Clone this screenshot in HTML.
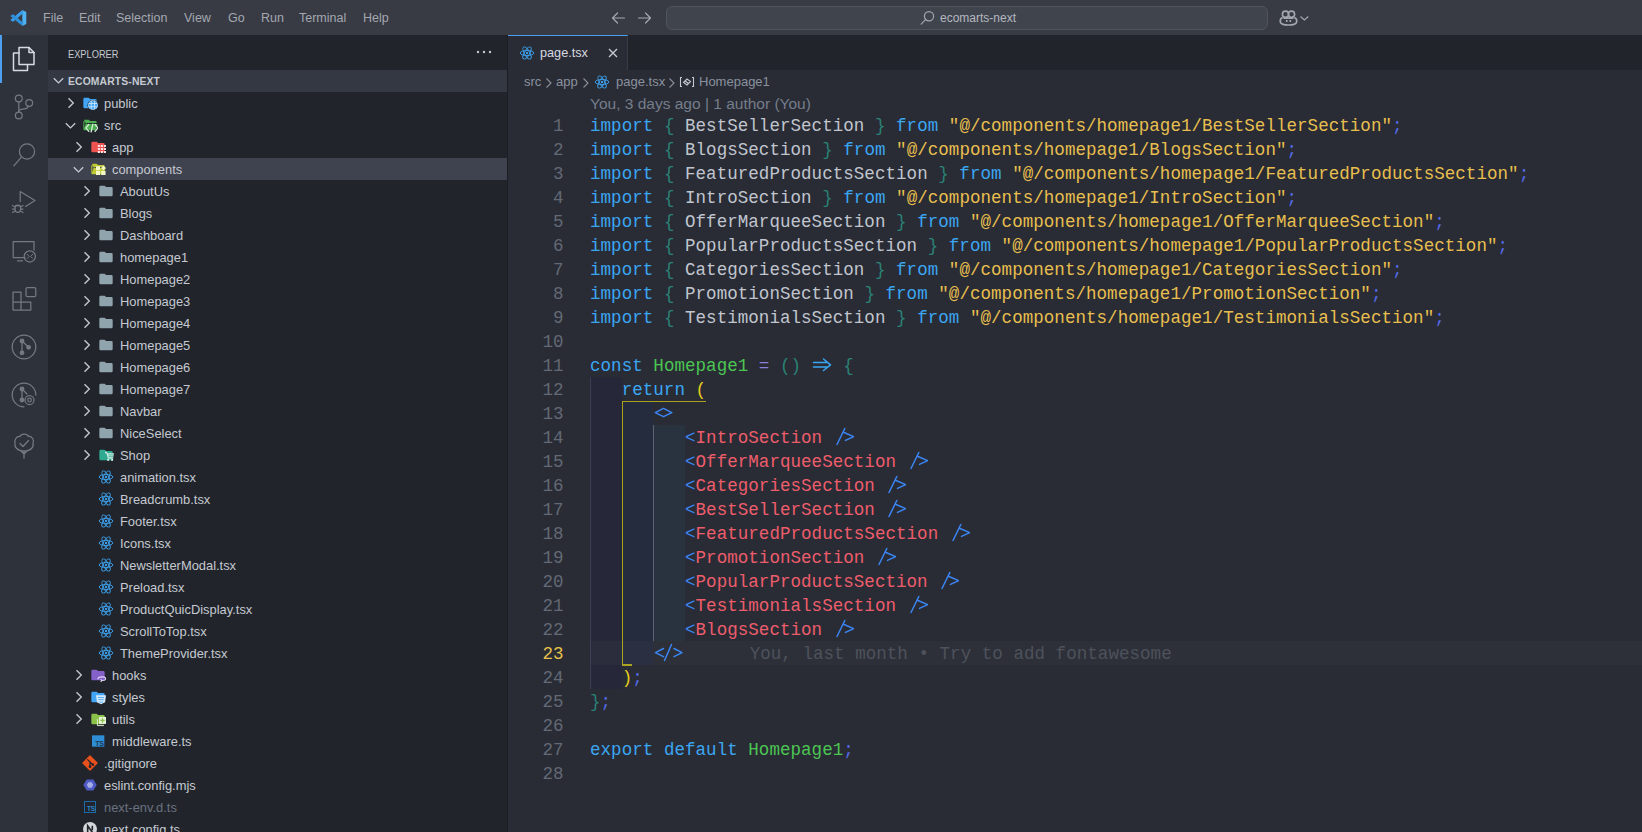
<!DOCTYPE html>
<html><head><meta charset="utf-8">
<style>
*{box-sizing:border-box;margin:0;padding:0}
html,body{width:1642px;height:832px;overflow:hidden;background:#282c34;font-family:"Liberation Sans",sans-serif}
.abs{position:absolute}
#title{position:absolute;left:0;top:0;width:1642px;height:35px;background:#383b44}
#title .m{position:absolute;top:11px;font-size:12.5px;color:#a3a7b0;line-height:14px;white-space:nowrap}
#act{position:absolute;left:0;top:35px;width:48px;height:797px;background:#2e323b}
#side{position:absolute;left:48px;top:35px;width:459px;height:797px;background:#21252b}
#sideborder{position:absolute;left:507px;top:35px;width:1px;height:797px;background:#1b1e23}
#tabs{position:absolute;left:508px;top:35px;width:1134px;height:35px;background:#21252b}
#editor{position:absolute;left:508px;top:70px;width:1134px;height:762px;background:#292c35}
.row{position:absolute;left:0;width:459px;height:22px;font-size:12.9px;color:#c5c9d1;line-height:22px;white-space:nowrap}
.row span.lb{position:absolute;top:1px}
.code{position:absolute;font-family:"Liberation Mono",monospace;font-size:17.5px;letter-spacing:0.05px;line-height:24px;white-space:pre;color:#c0c5ce;height:24px;padding-top:1px}
.ln{position:absolute;left:0;width:55.5px;text-align:right;font-family:"Liberation Mono",monospace;font-size:17.5px;line-height:24px;color:#636975;padding-top:1px}
.ln.cur{color:#e6c24a}
.k{color:#3ba6f2}.b{color:#2a8275}.i{color:#c0c5ce}.s{color:#e8bf4e}.sc{color:#5569e6}.g{color:#4cc552}.op{color:#8b7fd6}.y{color:#e8cf1c}.t{color:#3b86f5}.r{color:#ee5d6c}
.bl{color:#4d525b;position:relative;left:1.5px}
.lg{display:inline-block;vertical-align:top;height:24px;position:relative;top:-1px}
.lg svg{display:block}
.bc{font-size:13px;line-height:16px;color:#8a919e;white-space:nowrap}
</style></head><body>
<div id="title">
  <svg class="abs" style="left:0;top:0" width="40" height="35"><g fill="#3a9ce6"><path d="M22.3 10L26.3 11.9V24.1L22.3 26Z" fill="#4fb0f2"/><path d="M22.3 10L23.2 13.2L13.2 21.8L11.6 21L10.3 19.9Z"/><path d="M10.3 16.1L11.6 15L13.2 14.2L23.2 22.8L22.3 26Z" fill="#2f8fd8"/></g></svg>
<svg class="abs" style="left:606px;top:9px" width="52" height="18"><g fill="none" stroke="#a3a7b0" stroke-width="1.2" stroke-linecap="round" stroke-linejoin="round"><path d="M18.5 9H6.5M11.5 4L6.5 9L11.5 14"/><path d="M32.5 9H44.5M39.5 4L44.5 9L39.5 14"/></g></svg>
<div class="abs" style="left:666px;top:6px;width:602px;height:24px;background:#40444d;border:1px solid #50545d;border-radius:6px"></div>
<svg class="abs" style="left:918px;top:9px" width="18" height="18"><g fill="none" stroke="#a3a7b0" stroke-width="1.2"><circle cx="11" cy="7.2" r="4.6"/><path d="M7.8 10.4L3.2 15.2" stroke-linecap="round"/></g></svg>
<div class="abs" style="left:940px;top:11px;font-size:12px;line-height:14px;color:#b4b8c0;white-space:nowrap">ecomarts-next</div>
<svg class="abs" style="left:1278px;top:8px" width="34" height="20"><g fill="none" stroke="#a3a7af" stroke-width="1.6"><circle cx="7.5" cy="6.2" r="3.1"/><circle cx="13.5" cy="6.2" r="3.1"/><path d="M4.6 9.6C2.6 10.3 2 12 2.3 14C2.8 16.3 6 17 10.5 17C15 17 18.2 16.3 18.7 14C19 12 18.4 10.3 16.4 9.6"/><path d="M5.5 10.2H15.5"/><path d="M8.7 12V14M12.3 12V14"/></g><path d="M22.5 8.5L26.4 12L30.3 8.5" fill="none" stroke="#a3a7af" stroke-width="1.1"/></svg>
<div class="m" style="left:43px">File</div>
  <div class="m" style="left:79px">Edit</div>
  <div class="m" style="left:116px">Selection</div>
  <div class="m" style="left:184px">View</div>
  <div class="m" style="left:228px">Go</div>
  <div class="m" style="left:261px">Run</div>
  <div class="m" style="left:299px">Terminal</div>
  <div class="m" style="left:363px">Help</div>
</div>
<div id="act">
<div class="abs" style="left:0;top:0;width:2px;height:48px;background:#4d9df0"></div>
<svg class="abs" style="left:0;top:0" width="48" height="480" viewBox="0 35 48 480" fill="none" stroke-linejoin="round" stroke-linecap="round">
 <g stroke="#d7dae0" stroke-width="1.5">
  <path d="M19 53 H13.5 V70.5 H27.5 V65"/>
  <path d="M19 47.5 H29 L34 52.5 V64.5 H19 Z"/>
  <path d="M29 47.5 V52.5 H34"/>
 </g>
 <g stroke="#757983" stroke-width="1.25">
  <circle cx="18.8" cy="98.4" r="3.4"/>
  <circle cx="29.2" cy="102.9" r="3.4"/>
  <circle cx="18.8" cy="115.5" r="3.4"/>
  <path d="M18.8 101.8 V112.1"/>
  <path d="M28.5 106.2 C27.5 108.5 25.5 109 22.5 109 C20.5 109 19 110 18.8 112"/>
  <circle cx="27" cy="151.5" r="7.6"/>
  <path d="M21.6 156.9 L13.8 165.8"/>
  <path d="M20.2 201.5 V191.5 L35 200.5 L25.5 206.5"/>
  <ellipse cx="17.8" cy="208.8" rx="2.8" ry="3.6"/>
  <path d="M12.5 205.5 L15 207 M12.5 212.5 L15 211 M23 205.5 L20.6 207 M23 212.5 L20.6 211 M12.5 209 H15 M20.6 209 H23 M15.5 205.5 L20 205.5"/>
  <path d="M25 257.5 H13.2 V241.5 H34 V250"/>
  <path d="M17.5 260.8 H22.5"/>
  <circle cx="29.8" cy="256.4" r="5.6"/>
  <path d="M27.2 254.4 L29.2 256.4 L27.2 258.4 M32.6 254.4 L30.6 256.4 L32.6 258.4" stroke-width="1"/>
  <path d="M13 292 H21 V302 H30.8 V310 H13 Z M13 302 H21 V310"/>
  <rect x="26" y="287.5" width="9.8" height="9.2" rx="1.5"/>
  <circle cx="24" cy="347" r="11.8"/>
  <circle cx="22" cy="341" r="1.8" fill="#757983"/>
  <circle cx="28.6" cy="347.3" r="1.8" fill="#757983"/>
  <circle cx="22" cy="352.8" r="1.8" fill="#757983"/>
  <path d="M22 341 V352.8 M22 341 L28.6 347.3"/>
  <path d="M35.8 395 A11.8 11.8 0 1 0 24 406.8"/>
  <circle cx="22" cy="389" r="1.8" fill="#757983"/>
  <circle cx="22" cy="400" r="1.8" fill="#757983"/>
  <path d="M22 389 V400 M22 389 L27 394"/>
  <circle cx="29.5" cy="400" r="4.5"/>
  <circle cx="29.5" cy="400" r="1.8"/>
  <path d="M24 451 C17 451 14.5 447 15 443.5 C14 440 16.5 436 20 436.5 C21 433.5 27 433 28.5 436.5 C32 436 34.5 440 33 443.5 C34 447 31 451 24 451 Z"/>
  <path d="M24 451 V458 M24 454 L21 451 M24 454 L27 451"/>
  <path d="M20 443.5 L23 446.5 L28.5 440.5"/>
 </g>
</svg>
</div>
<svg width="0" height="0" style="position:absolute">
<defs>
 <path id="pfold" d="M10 4H4c-1.11 0-2 .89-2 2v12a2 2 0 0 0 2 2h16a2 2 0 0 0 2-2V8a2 2 0 0 0-2-2h-8l-2-2z"/>
 <path id="pfoldo" d="M3.5 4H10l2 2h8a2 2 0 0 1 2 2v1H7.2a2 2 0 0 0-1.9 1.4L3.5 17V4zM2 6v12a2 2 0 0 0 2 2h16.2l3.3-9.6H7.6z"/>
 <symbol id="fgray" viewBox="0 0 24 24"><use href="#pfold" fill="#90a4ae"/></symbol>
 <symbol id="fpublic" viewBox="0 0 24 24"><use href="#pfold" fill="#42a5f5"/>
  <circle cx="16.4" cy="15.2" r="8.2" fill="#21252b"/><circle cx="16.4" cy="15.2" r="7.4" fill="#c8e4fb"/>
  <g fill="#42a5f5"><rect x="14.6" y="13.4" width="3.6" height="3.6"/><rect x="9.8" y="13.4" width="3.4" height="3.6"/><rect x="19.6" y="13.4" width="3.4" height="3.6"/><rect x="14.6" y="8.8" width="3.6" height="3.2"/><rect x="14.6" y="18.4" width="3.6" height="3.2"/><rect x="11" y="9.8" width="2.4" height="2.2"/><rect x="19.4" y="9.8" width="2.4" height="2.2"/><rect x="11" y="18.4" width="2.4" height="2.2"/><rect x="19.4" y="18.4" width="2.4" height="2.2"/></g></symbol>
 <symbol id="fsrc" viewBox="0 0 24 24"><use href="#pfoldo" fill="#4caf50"/>
  <g stroke="#d4edd5" stroke-width="2" fill="none" stroke-linecap="round" stroke-linejoin="round"><path d="M10.2 11.2l-4.4 5.2 4.4 5.2M19.6 11.2l4.2 5.2-4.2 5.2M16.3 10.6l-2.6 11.8"/></g></symbol>
 <symbol id="fapp" viewBox="0 0 24 24"><use href="#pfold" fill="#ef5350"/>
  <g fill="#ffe0e3"><rect x="11.7" y="9" width="3.2" height="3"/><rect x="16.2" y="9" width="3.2" height="3"/><rect x="20.7" y="9" width="3.2" height="3"/><rect x="11.7" y="13.5" width="3.2" height="3"/><rect x="16.2" y="13.5" width="3.2" height="3"/><rect x="20.7" y="13.5" width="3.2" height="3"/><rect x="11.7" y="18" width="3.2" height="3"/><rect x="16.2" y="18" width="3.2" height="3"/><rect x="20.7" y="18" width="3.2" height="3"/></g></symbol>
 <symbol id="fcomp" viewBox="0 0 24 24"><use href="#pfoldo" fill="#c0ca33"/>
  <g fill="#f4f8c8"><rect x="9" y="8" width="6.2" height="5.8"/><rect x="9" y="14.8" width="6.2" height="6.2"/><rect x="16.8" y="14.8" width="6.5" height="6.2"/><path d="M20.2 6.8l3.6 3.6-3.6 3.6-3.6-3.6z"/></g></symbol>
 <symbol id="fshop" viewBox="0 0 24 24"><use href="#pfold" fill="#2fa98f"/>
  <g fill="#d0ebe4"><path d="M10.5 7.2h2.6l1 2.3h9.8l-1.2 6.8h-8.2l-2-6.8h-2z"/><rect x="13.8" y="18" width="2.8" height="2.8"/><rect x="19.8" y="18" width="2.8" height="2.8"/><rect x="14.5" y="16.3" width="8.4" height="1.2"/></g><path d="M15.3 11.8h7.5M15.8 14h6.8" stroke="#2fa98f" stroke-width="1.1"/></symbol>
 <symbol id="fhooks" viewBox="0 0 24 24"><use href="#pfold" fill="#8460c9"/>
  <g fill="none" stroke="#e2d6f5" stroke-width="1.7"><path d="M12.5 18.5C11 16.5 14 14.8 18 14.8C21.5 14.8 23.5 16 23.5 17.5C23.5 19.2 21 20.3 17.5 20.3"/><path d="M16 18.5l1.8 1.8-1.8 1.8"/></g></symbol>
 <symbol id="fstyles" viewBox="0 0 24 24"><use href="#pfold" fill="#42a5f5"/>
  <path d="M9 9.5h15l-1.4 10.2-6.1 3.2-6.1-3.2z" fill="#d4eafc"/><path d="M12 12.8h9M12.6 16h8M14 19.2l2.5 1 2.8-1" stroke="#42a5f5" stroke-width="1.3" fill="none"/></symbol>
 <symbol id="futils" viewBox="0 0 24 24"><use href="#pfold" fill="#8bc34a"/>
    <path d="M11.1 12.2v9.7h9.8" fill="none" stroke="#e6f2d6" stroke-width="1.4"/>
    <rect x="13.5" y="9" width="10.5" height="10.4" fill="#e6f2d6"/><path d="M18.75 10.8v6.8M15.35 14.2h6.8" stroke="#8bc34a" stroke-width="1.9"/></symbol>
 <symbol id="react" viewBox="0 0 24 24"><g fill="none" stroke="#3d9ee8" stroke-width="1.45"><ellipse cx="12" cy="12" rx="10.2" ry="3.9"/><ellipse cx="12" cy="12" rx="10.2" ry="3.9" transform="rotate(60 12 12)"/><ellipse cx="12" cy="12" rx="10.2" ry="3.9" transform="rotate(120 12 12)"/></g><circle cx="12" cy="12" r="1.8" fill="#3d9ee8"/></symbol>
 <symbol id="ts" viewBox="0 0 24 24"><rect x="3" y="3.5" width="18.5" height="17" fill="#2d8ed6"/><text x="14" y="19.5" font-family="Liberation Sans" font-weight="bold" font-size="10.5" fill="#1f3550" text-anchor="middle" letter-spacing="-0.5">TS</text></symbol>
 <symbol id="tsout" viewBox="0 0 24 24"><rect x="3.7" y="3.7" width="16.6" height="16.6" fill="none" stroke="#1f6fb0" stroke-width="1.4"/><text x="13.5" y="18.5" font-family="Liberation Sans" font-weight="bold" font-size="10" fill="#2b82c9" text-anchor="middle" letter-spacing="-0.5">TS</text></symbol>
 <symbol id="git" viewBox="0 0 24 24"><path d="M12 1.5L22.5 12 12 22.5 1.5 12z" fill="#e8501c" stroke="#e8501c" stroke-width="2" stroke-linejoin="round"/><g stroke="#21252b" stroke-width="1.7" fill="none"><path d="M8 6.5L12 10.5v7M12 10.5l4 4"/></g><circle cx="12" cy="17.5" r="2" fill="#21252b"/><circle cx="16.2" cy="14.5" r="2" fill="#21252b"/></symbol>
 <symbol id="eslint" viewBox="0 0 24 24"><path d="M7 3.8h10L22 12l-5 8.2H7L2 12z" fill="#4f5bc4"/><path d="M9.6 8h4.8L16.8 12l-2.4 4H9.6L7.2 12z" fill="#a5aee6"/></symbol>
 <symbol id="next" viewBox="0 0 24 24"><circle cx="12" cy="12" r="10.5" fill="#d3d7da"/><path d="M8.5 17.5V7l8.5 12M15.5 7v7" stroke="#21252b" stroke-width="2.4" fill="none"/></symbol>
</defs></svg>
<div id="side">
<div class="abs" style="left:20px;top:11.5px;font-size:11.3px;color:#c5c9d1;line-height:14px;transform:scaleX(0.82);transform-origin:0 0">EXPLORER</div>
<svg class="abs" style="left:428px;top:12px" width="16" height="10"><circle cx="2" cy="5" r="1.2" fill="#c5c9d1"/><circle cx="8" cy="5" r="1.2" fill="#c5c9d1"/><circle cx="14" cy="5" r="1.2" fill="#c5c9d1"/></svg>
<div class="abs" style="left:0;top:35px;width:459px;height:22px;background:#333842"></div>
<svg class="abs" style="left:5px;top:41px" width="12" height="10"><path d="M0.8 2.2 L5.5 6.9 L10.2 2.2" fill="none" stroke="#c5c9d1" stroke-width="1.35"/></svg>
<div class="abs" style="left:20px;top:35px;font-size:11px;font-weight:bold;color:#c5c9d1;line-height:22px;letter-spacing:0.15px;transform:scaleX(0.94);transform-origin:0 0">ECOMARTS-NEXT</div>
<div class="row" style="top:57px;">
<svg class="abs" style="left:19px;top:5px" width="10" height="12"><path d="M1.5 1.2 L6.3 6 L1.5 10.8" fill="none" stroke="#c5c9d1" stroke-width="1.35"/></svg>
<svg class="abs" style="left:34px;top:3px" width="16" height="16"><use href="#fpublic"/></svg>
<span class="lb" style="left:56px;">public</span>
</div>
<div class="row" style="top:79px;">
<svg class="abs" style="left:17px;top:8px" width="12" height="8"><path d="M0.8 1.2 L5.5 5.9 L10.2 1.2" fill="none" stroke="#c5c9d1" stroke-width="1.35"/></svg>
<svg class="abs" style="left:34px;top:3px" width="16" height="16"><use href="#fsrc"/></svg>
<span class="lb" style="left:56px;">src</span>
</div>
<div class="row" style="top:101px;">
<svg class="abs" style="left:27px;top:5px" width="10" height="12"><path d="M1.5 1.2 L6.3 6 L1.5 10.8" fill="none" stroke="#c5c9d1" stroke-width="1.35"/></svg>
<svg class="abs" style="left:42px;top:3px" width="16" height="16"><use href="#fapp"/></svg>
<span class="lb" style="left:64px;">app</span>
</div>
<div class="row" style="top:123px;background:#3f4350;">
<svg class="abs" style="left:25px;top:8px" width="12" height="8"><path d="M0.8 1.2 L5.5 5.9 L10.2 1.2" fill="none" stroke="#c5c9d1" stroke-width="1.35"/></svg>
<svg class="abs" style="left:42px;top:3px" width="16" height="16"><use href="#fcomp"/></svg>
<span class="lb" style="left:64px;">components</span>
</div>
<div class="row" style="top:145px;">
<svg class="abs" style="left:35px;top:5px" width="10" height="12"><path d="M1.5 1.2 L6.3 6 L1.5 10.8" fill="none" stroke="#c5c9d1" stroke-width="1.35"/></svg>
<svg class="abs" style="left:50px;top:3px" width="16" height="16"><use href="#fgray"/></svg>
<span class="lb" style="left:72px;">AboutUs</span>
</div>
<div class="row" style="top:167px;">
<svg class="abs" style="left:35px;top:5px" width="10" height="12"><path d="M1.5 1.2 L6.3 6 L1.5 10.8" fill="none" stroke="#c5c9d1" stroke-width="1.35"/></svg>
<svg class="abs" style="left:50px;top:3px" width="16" height="16"><use href="#fgray"/></svg>
<span class="lb" style="left:72px;">Blogs</span>
</div>
<div class="row" style="top:189px;">
<svg class="abs" style="left:35px;top:5px" width="10" height="12"><path d="M1.5 1.2 L6.3 6 L1.5 10.8" fill="none" stroke="#c5c9d1" stroke-width="1.35"/></svg>
<svg class="abs" style="left:50px;top:3px" width="16" height="16"><use href="#fgray"/></svg>
<span class="lb" style="left:72px;">Dashboard</span>
</div>
<div class="row" style="top:211px;">
<svg class="abs" style="left:35px;top:5px" width="10" height="12"><path d="M1.5 1.2 L6.3 6 L1.5 10.8" fill="none" stroke="#c5c9d1" stroke-width="1.35"/></svg>
<svg class="abs" style="left:50px;top:3px" width="16" height="16"><use href="#fgray"/></svg>
<span class="lb" style="left:72px;">homepage1</span>
</div>
<div class="row" style="top:233px;">
<svg class="abs" style="left:35px;top:5px" width="10" height="12"><path d="M1.5 1.2 L6.3 6 L1.5 10.8" fill="none" stroke="#c5c9d1" stroke-width="1.35"/></svg>
<svg class="abs" style="left:50px;top:3px" width="16" height="16"><use href="#fgray"/></svg>
<span class="lb" style="left:72px;">Homepage2</span>
</div>
<div class="row" style="top:255px;">
<svg class="abs" style="left:35px;top:5px" width="10" height="12"><path d="M1.5 1.2 L6.3 6 L1.5 10.8" fill="none" stroke="#c5c9d1" stroke-width="1.35"/></svg>
<svg class="abs" style="left:50px;top:3px" width="16" height="16"><use href="#fgray"/></svg>
<span class="lb" style="left:72px;">Homepage3</span>
</div>
<div class="row" style="top:277px;">
<svg class="abs" style="left:35px;top:5px" width="10" height="12"><path d="M1.5 1.2 L6.3 6 L1.5 10.8" fill="none" stroke="#c5c9d1" stroke-width="1.35"/></svg>
<svg class="abs" style="left:50px;top:3px" width="16" height="16"><use href="#fgray"/></svg>
<span class="lb" style="left:72px;">Homepage4</span>
</div>
<div class="row" style="top:299px;">
<svg class="abs" style="left:35px;top:5px" width="10" height="12"><path d="M1.5 1.2 L6.3 6 L1.5 10.8" fill="none" stroke="#c5c9d1" stroke-width="1.35"/></svg>
<svg class="abs" style="left:50px;top:3px" width="16" height="16"><use href="#fgray"/></svg>
<span class="lb" style="left:72px;">Homepage5</span>
</div>
<div class="row" style="top:321px;">
<svg class="abs" style="left:35px;top:5px" width="10" height="12"><path d="M1.5 1.2 L6.3 6 L1.5 10.8" fill="none" stroke="#c5c9d1" stroke-width="1.35"/></svg>
<svg class="abs" style="left:50px;top:3px" width="16" height="16"><use href="#fgray"/></svg>
<span class="lb" style="left:72px;">Homepage6</span>
</div>
<div class="row" style="top:343px;">
<svg class="abs" style="left:35px;top:5px" width="10" height="12"><path d="M1.5 1.2 L6.3 6 L1.5 10.8" fill="none" stroke="#c5c9d1" stroke-width="1.35"/></svg>
<svg class="abs" style="left:50px;top:3px" width="16" height="16"><use href="#fgray"/></svg>
<span class="lb" style="left:72px;">Homepage7</span>
</div>
<div class="row" style="top:365px;">
<svg class="abs" style="left:35px;top:5px" width="10" height="12"><path d="M1.5 1.2 L6.3 6 L1.5 10.8" fill="none" stroke="#c5c9d1" stroke-width="1.35"/></svg>
<svg class="abs" style="left:50px;top:3px" width="16" height="16"><use href="#fgray"/></svg>
<span class="lb" style="left:72px;">Navbar</span>
</div>
<div class="row" style="top:387px;">
<svg class="abs" style="left:35px;top:5px" width="10" height="12"><path d="M1.5 1.2 L6.3 6 L1.5 10.8" fill="none" stroke="#c5c9d1" stroke-width="1.35"/></svg>
<svg class="abs" style="left:50px;top:3px" width="16" height="16"><use href="#fgray"/></svg>
<span class="lb" style="left:72px;">NiceSelect</span>
</div>
<div class="row" style="top:409px;">
<svg class="abs" style="left:35px;top:5px" width="10" height="12"><path d="M1.5 1.2 L6.3 6 L1.5 10.8" fill="none" stroke="#c5c9d1" stroke-width="1.35"/></svg>
<svg class="abs" style="left:50px;top:3px" width="16" height="16"><use href="#fshop"/></svg>
<span class="lb" style="left:72px;">Shop</span>
</div>
<div class="row" style="top:431px;">
<svg class="abs" style="left:50px;top:3px" width="16" height="16"><use href="#react"/></svg>
<span class="lb" style="left:72px;">animation.tsx</span>
</div>
<div class="row" style="top:453px;">
<svg class="abs" style="left:50px;top:3px" width="16" height="16"><use href="#react"/></svg>
<span class="lb" style="left:72px;">Breadcrumb.tsx</span>
</div>
<div class="row" style="top:475px;">
<svg class="abs" style="left:50px;top:3px" width="16" height="16"><use href="#react"/></svg>
<span class="lb" style="left:72px;">Footer.tsx</span>
</div>
<div class="row" style="top:497px;">
<svg class="abs" style="left:50px;top:3px" width="16" height="16"><use href="#react"/></svg>
<span class="lb" style="left:72px;">Icons.tsx</span>
</div>
<div class="row" style="top:519px;">
<svg class="abs" style="left:50px;top:3px" width="16" height="16"><use href="#react"/></svg>
<span class="lb" style="left:72px;">NewsletterModal.tsx</span>
</div>
<div class="row" style="top:541px;">
<svg class="abs" style="left:50px;top:3px" width="16" height="16"><use href="#react"/></svg>
<span class="lb" style="left:72px;">Preload.tsx</span>
</div>
<div class="row" style="top:563px;">
<svg class="abs" style="left:50px;top:3px" width="16" height="16"><use href="#react"/></svg>
<span class="lb" style="left:72px;">ProductQuicDisplay.tsx</span>
</div>
<div class="row" style="top:585px;">
<svg class="abs" style="left:50px;top:3px" width="16" height="16"><use href="#react"/></svg>
<span class="lb" style="left:72px;">ScrollToTop.tsx</span>
</div>
<div class="row" style="top:607px;">
<svg class="abs" style="left:50px;top:3px" width="16" height="16"><use href="#react"/></svg>
<span class="lb" style="left:72px;">ThemeProvider.tsx</span>
</div>
<div class="row" style="top:629px;">
<svg class="abs" style="left:27px;top:5px" width="10" height="12"><path d="M1.5 1.2 L6.3 6 L1.5 10.8" fill="none" stroke="#c5c9d1" stroke-width="1.35"/></svg>
<svg class="abs" style="left:42px;top:3px" width="16" height="16"><use href="#fhooks"/></svg>
<span class="lb" style="left:64px;">hooks</span>
</div>
<div class="row" style="top:651px;">
<svg class="abs" style="left:27px;top:5px" width="10" height="12"><path d="M1.5 1.2 L6.3 6 L1.5 10.8" fill="none" stroke="#c5c9d1" stroke-width="1.35"/></svg>
<svg class="abs" style="left:42px;top:3px" width="16" height="16"><use href="#fstyles"/></svg>
<span class="lb" style="left:64px;">styles</span>
</div>
<div class="row" style="top:673px;">
<svg class="abs" style="left:27px;top:5px" width="10" height="12"><path d="M1.5 1.2 L6.3 6 L1.5 10.8" fill="none" stroke="#c5c9d1" stroke-width="1.35"/></svg>
<svg class="abs" style="left:42px;top:3px" width="16" height="16"><use href="#futils"/></svg>
<span class="lb" style="left:64px;">utils</span>
</div>
<div class="row" style="top:695px;">
<svg class="abs" style="left:42px;top:3px" width="16" height="16"><use href="#ts"/></svg>
<span class="lb" style="left:64px;">middleware.ts</span>
</div>
<div class="row" style="top:717px;">
<svg class="abs" style="left:34px;top:3px" width="16" height="16"><use href="#git"/></svg>
<span class="lb" style="left:56px;">.gitignore</span>
</div>
<div class="row" style="top:739px;">
<svg class="abs" style="left:34px;top:3px" width="16" height="16"><use href="#eslint"/></svg>
<span class="lb" style="left:56px;">eslint.config.mjs</span>
</div>
<div class="row" style="top:761px;">
<svg class="abs" style="left:34px;top:3px" width="16" height="16"><use href="#tsout"/></svg>
<span class="lb" style="left:56px;color:#6b7180;">next-env.d.ts</span>
</div>
<div class="row" style="top:783px;">
<svg class="abs" style="left:34px;top:3px" width="16" height="16"><use href="#next"/></svg>
<span class="lb" style="left:56px;">next.config.ts</span>
</div>
</div>
<div id="sideborder"></div>
<div id="tabs">
<div class="abs" style="left:0;top:0;width:120px;height:35px;background:#292c35;border-top:1px solid #4d9df0;border-right:1px solid #383c45"></div>
<svg class="abs" style="left:11px;top:10px" width="16" height="16"><use href="#react"/></svg>
<div class="abs" style="left:32px;top:10px;font-size:12.7px;line-height:16px;color:#d7dae0">page.tsx</div>
<svg class="abs" style="left:100px;top:13px" width="10" height="10"><path d="M1 1L9 9M9 1L1 9" stroke="#c5c9d1" stroke-width="1.35"/></svg>
</div>
<div id="editor">
<div class="abs bc" style="left:16px;top:4px">src</div>
<svg class="abs" style="left:37px;top:7px" width="8" height="12"><path d="M1.5 1.5L6 6L1.5 10.5" fill="none" stroke="#8b919c" stroke-width="1.1"/></svg>
<div class="abs bc" style="left:48px;top:4px">app</div>
<svg class="abs" style="left:74px;top:7px" width="8" height="12"><path d="M1.5 1.5L6 6L1.5 10.5" fill="none" stroke="#8b919c" stroke-width="1.1"/></svg>
<svg class="abs" style="left:86px;top:4px" width="16" height="16"><use href="#react"/></svg>
<div class="abs bc" style="left:108px;top:4px">page.tsx</div>
<svg class="abs" style="left:160px;top:7px" width="8" height="12"><path d="M1.5 1.5L6 6L1.5 10.5" fill="none" stroke="#8b919c" stroke-width="1.1"/></svg>
<svg class="abs" style="left:171px;top:5px" width="16" height="14"><g fill="none" stroke="#c5c9d1" stroke-width="1.1"><path d="M3 2.5H1.5V11.5H3M13 2.5H14.5V11.5H13"/><path d="M4.5 7.5L8 4L11.5 6.5L8 10Z"/><path d="M6 6l3.5 2.5"/></g></svg>
<div class="abs bc" style="left:191px;top:4px">Homepage1</div>
<div class="abs" style="left:82px;top:24px;font-size:15.5px;line-height:20px;color:#757d8b;white-space:nowrap">You, 3 days ago | 1 author (You)</div>
<div class="abs" style="left:82.0px;top:307px;width:31.5px;height:312px;background:#262839"></div>
<div class="abs" style="left:113.5px;top:331px;width:31.5px;height:264px;background:#252c3d"></div>
<div class="abs" style="left:145.0px;top:355px;width:31.5px;height:216px;background:#29333f"></div>
<div class="abs" style="left:82px;top:307px;width:1px;height:312px;background:#3a3e52"></div>
<div class="abs" style="left:145.0px;top:355px;width:1px;height:216px;background:#5d6474"></div>
<div class="abs" style="left:113.5px;top:330.5px;width:84.0px;height:1.5px;background:#a8a21f"></div>
<div class="abs" style="left:113.5px;top:331px;width:1.5px;height:264px;background:#a8a21f"></div>
<div class="abs" style="left:113.5px;top:594px;width:10.5px;height:1.5px;background:#a8a21f"></div>
<div class="abs" style="left:82px;top:571px;width:1052px;height:24px;background:rgba(255,255,255,0.024)"></div>
<div class="ln" style="top:43px">1</div>
<div class="code" style="left:82px;top:43px"><span class="k">import</span> <span class="b">{</span><span class="i"> BestSellerSection </span><span class="b">}</span> <span class="k">from</span> <span class="s">"@/components/homepage1/BestSellerSection"</span><span class="sc">;</span></div>
<div class="ln" style="top:67px">2</div>
<div class="code" style="left:82px;top:67px"><span class="k">import</span> <span class="b">{</span><span class="i"> BlogsSection </span><span class="b">}</span> <span class="k">from</span> <span class="s">"@/components/homepage1/BlogsSection"</span><span class="sc">;</span></div>
<div class="ln" style="top:91px">3</div>
<div class="code" style="left:82px;top:91px"><span class="k">import</span> <span class="b">{</span><span class="i"> FeaturedProductsSection </span><span class="b">}</span> <span class="k">from</span> <span class="s">"@/components/homepage1/FeaturedProductsSection"</span><span class="sc">;</span></div>
<div class="ln" style="top:115px">4</div>
<div class="code" style="left:82px;top:115px"><span class="k">import</span> <span class="b">{</span><span class="i"> IntroSection </span><span class="b">}</span> <span class="k">from</span> <span class="s">"@/components/homepage1/IntroSection"</span><span class="sc">;</span></div>
<div class="ln" style="top:139px">5</div>
<div class="code" style="left:82px;top:139px"><span class="k">import</span> <span class="b">{</span><span class="i"> OfferMarqueeSection </span><span class="b">}</span> <span class="k">from</span> <span class="s">"@/components/homepage1/OfferMarqueeSection"</span><span class="sc">;</span></div>
<div class="ln" style="top:163px">6</div>
<div class="code" style="left:82px;top:163px"><span class="k">import</span> <span class="b">{</span><span class="i"> PopularProductsSection </span><span class="b">}</span> <span class="k">from</span> <span class="s">"@/components/homepage1/PopularProductsSection"</span><span class="sc">;</span></div>
<div class="ln" style="top:187px">7</div>
<div class="code" style="left:82px;top:187px"><span class="k">import</span> <span class="b">{</span><span class="i"> CategoriesSection </span><span class="b">}</span> <span class="k">from</span> <span class="s">"@/components/homepage1/CategoriesSection"</span><span class="sc">;</span></div>
<div class="ln" style="top:211px">8</div>
<div class="code" style="left:82px;top:211px"><span class="k">import</span> <span class="b">{</span><span class="i"> PromotionSection </span><span class="b">}</span> <span class="k">from</span> <span class="s">"@/components/homepage1/PromotionSection"</span><span class="sc">;</span></div>
<div class="ln" style="top:235px">9</div>
<div class="code" style="left:82px;top:235px"><span class="k">import</span> <span class="b">{</span><span class="i"> TestimonialsSection </span><span class="b">}</span> <span class="k">from</span> <span class="s">"@/components/homepage1/TestimonialsSection"</span><span class="sc">;</span></div>
<div class="ln" style="top:259px">10</div>
<div class="ln" style="top:283px">11</div>
<div class="code" style="left:82px;top:283px"><span class="k">const</span> <span class="g">Homepage1</span> <span class="op">=</span> <span class="b">()</span> <span class="lg" style="width:21px"><svg width="21" height="24"><path d="M1.5 9.5H15M1.5 14H15M11.5 6L18.5 11.8L11.5 17.5" fill="none" stroke="#3ba6f2" stroke-width="1.5" stroke-linecap="round" stroke-linejoin="round"/></svg></span> <span class="b">{</span></div>
<div class="ln" style="top:307px">12</div>
<div class="code" style="left:82px;top:307px">   <span class="k">return</span> <span class="y">(</span></div>
<div class="ln" style="top:331px">13</div>
<div class="code" style="left:82px;top:331px">      <span class="lg" style="width:21px"><svg width="21" height="24"><path d="M2.3 11.6L10.5 7.4L18.8 11.6L10.5 15.6Z" fill="none" stroke="#3b86f5" stroke-width="1.5" stroke-linejoin="round"/></svg></span></div>
<div class="ln" style="top:355px">14</div>
<div class="code" style="left:82px;top:355px">         <span class="t">&lt;</span><span class="r">IntroSection</span> <span class="lg" style="width:21px"><svg width="21" height="24"><path d="M4 19.5L11.8 3.5M11 7.5L20.7 11.6L12.5 15.4" fill="none" stroke="#3b86f5" stroke-width="1.5" stroke-linecap="round" stroke-linejoin="round"/></svg></span></div>
<div class="ln" style="top:379px">15</div>
<div class="code" style="left:82px;top:379px">         <span class="t">&lt;</span><span class="r">OfferMarqueeSection</span> <span class="lg" style="width:21px"><svg width="21" height="24"><path d="M4 19.5L11.8 3.5M11 7.5L20.7 11.6L12.5 15.4" fill="none" stroke="#3b86f5" stroke-width="1.5" stroke-linecap="round" stroke-linejoin="round"/></svg></span></div>
<div class="ln" style="top:403px">16</div>
<div class="code" style="left:82px;top:403px">         <span class="t">&lt;</span><span class="r">CategoriesSection</span> <span class="lg" style="width:21px"><svg width="21" height="24"><path d="M4 19.5L11.8 3.5M11 7.5L20.7 11.6L12.5 15.4" fill="none" stroke="#3b86f5" stroke-width="1.5" stroke-linecap="round" stroke-linejoin="round"/></svg></span></div>
<div class="ln" style="top:427px">17</div>
<div class="code" style="left:82px;top:427px">         <span class="t">&lt;</span><span class="r">BestSellerSection</span> <span class="lg" style="width:21px"><svg width="21" height="24"><path d="M4 19.5L11.8 3.5M11 7.5L20.7 11.6L12.5 15.4" fill="none" stroke="#3b86f5" stroke-width="1.5" stroke-linecap="round" stroke-linejoin="round"/></svg></span></div>
<div class="ln" style="top:451px">18</div>
<div class="code" style="left:82px;top:451px">         <span class="t">&lt;</span><span class="r">FeaturedProductsSection</span> <span class="lg" style="width:21px"><svg width="21" height="24"><path d="M4 19.5L11.8 3.5M11 7.5L20.7 11.6L12.5 15.4" fill="none" stroke="#3b86f5" stroke-width="1.5" stroke-linecap="round" stroke-linejoin="round"/></svg></span></div>
<div class="ln" style="top:475px">19</div>
<div class="code" style="left:82px;top:475px">         <span class="t">&lt;</span><span class="r">PromotionSection</span> <span class="lg" style="width:21px"><svg width="21" height="24"><path d="M4 19.5L11.8 3.5M11 7.5L20.7 11.6L12.5 15.4" fill="none" stroke="#3b86f5" stroke-width="1.5" stroke-linecap="round" stroke-linejoin="round"/></svg></span></div>
<div class="ln" style="top:499px">20</div>
<div class="code" style="left:82px;top:499px">         <span class="t">&lt;</span><span class="r">PopularProductsSection</span> <span class="lg" style="width:21px"><svg width="21" height="24"><path d="M4 19.5L11.8 3.5M11 7.5L20.7 11.6L12.5 15.4" fill="none" stroke="#3b86f5" stroke-width="1.5" stroke-linecap="round" stroke-linejoin="round"/></svg></span></div>
<div class="ln" style="top:523px">21</div>
<div class="code" style="left:82px;top:523px">         <span class="t">&lt;</span><span class="r">TestimonialsSection</span> <span class="lg" style="width:21px"><svg width="21" height="24"><path d="M4 19.5L11.8 3.5M11 7.5L20.7 11.6L12.5 15.4" fill="none" stroke="#3b86f5" stroke-width="1.5" stroke-linecap="round" stroke-linejoin="round"/></svg></span></div>
<div class="ln" style="top:547px">22</div>
<div class="code" style="left:82px;top:547px">         <span class="t">&lt;</span><span class="r">BlogsSection</span> <span class="lg" style="width:21px"><svg width="21" height="24"><path d="M4 19.5L11.8 3.5M11 7.5L20.7 11.6L12.5 15.4" fill="none" stroke="#3b86f5" stroke-width="1.5" stroke-linecap="round" stroke-linejoin="round"/></svg></span></div>
<div class="ln cur" style="top:571px">23</div>
<div class="code" style="left:82px;top:571px">      <span class="lg" style="width:31.5px"><svg width="31.5" height="24"><path d="M10.5 7.5L2.5 11.6L10.5 15.6" fill="none" stroke="#3b86f5" stroke-width="1.5" stroke-linecap="round" stroke-linejoin="round"/><path d="M11.5 19.5L18.5 3.5" fill="none" stroke="#3b86f5" stroke-width="1.5" stroke-linecap="round"/><path d="M21 7.5L29 11.6L21 15.6" fill="none" stroke="#3b86f5" stroke-width="1.5" stroke-linecap="round" stroke-linejoin="round"/></svg></span>      <span class="bl">You, last month • Try to add fontawesome</span></div>
<div class="ln" style="top:595px">24</div>
<div class="code" style="left:82px;top:595px">   <span class="y">)</span><span class="sc">;</span></div>
<div class="ln" style="top:619px">25</div>
<div class="code" style="left:82px;top:619px"><span class="b">}</span><span class="sc">;</span></div>
<div class="ln" style="top:643px">26</div>
<div class="ln" style="top:667px">27</div>
<div class="code" style="left:82px;top:667px"><span class="k">export</span> <span class="k">default</span> <span class="g">Homepage1</span><span class="sc">;</span></div>
<div class="ln" style="top:691px">28</div>
</div>
</body></html>
